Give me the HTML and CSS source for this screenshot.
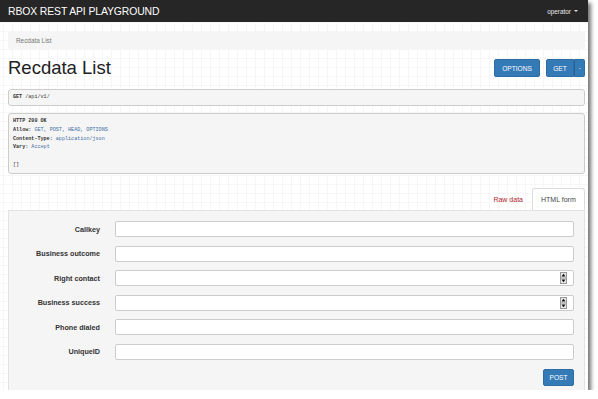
FILE: index.html
```html
<!DOCTYPE html>
<html>
<head>
<meta charset="utf-8">
<link rel="stylesheet" href="styles.css">
</head>
<body>
<div class="window">
  <nav class="navbar">
    <span class="brand">RBOX REST API PLAYGROUND</span>
    <span class="user">operator <i class="caret light"></i></span>
  </nav>
  <div class="container">
    <div class="breadcrumb">Recdata List</div>
    <div class="page-head">
      <h1>Recdata List</h1>
      <div class="actions">
        <button class="btn btn-options">OPTIONS</button>
        <div class="btn-group">
          <button class="btn btn-get">GET</button>
          <button class="btn btn-split"><i class="caret small"></i></button>
        </div>
      </div>
    </div>
    <pre class="request"><b>GET</b> /api/v1/</pre>
    <pre class="response"><b>HTTP 200 OK</b>
<b>Allow:</b> <span class="v">GET, POST, HEAD, OPTIONS</span>
<b>Content-Type:</b> <span class="v">application/json</span>
<b>Vary:</b> <span class="v">Accept</span>

[]</pre>
    <ul class="tabs">
      <li class="tab raw">Raw data</li>
      <li class="tab active">HTML form</li>
    </ul>
    <div class="well">
      <div class="form-grid">
        <label class="lbl">Callkey</label>
        <div class="field"></div>
        <label class="lbl">Business outcome</label>
        <div class="field"></div>
        <label class="lbl">Right contact</label>
        <div class="field num"><svg class="spin" width="7" height="12" viewBox="0 0 7 12"><rect x="0.5" y="0.5" width="6" height="11" fill="#e6e6e6" stroke="#9a9a9a" stroke-width="1"/><path d="M1.5 4.5 L3.5 1.8 L5.5 4.5 Z" fill="#111"/><path d="M1.5 7.5 L3.5 10.2 L5.5 7.5 Z" fill="#111"/><line x1="0.5" y1="6" x2="6.5" y2="6" stroke="#9a9a9a" stroke-width="1"/></svg></div>
        <label class="lbl">Business success</label>
        <div class="field num"><svg class="spin" width="7" height="12" viewBox="0 0 7 12"><rect x="0.5" y="0.5" width="6" height="11" fill="#e6e6e6" stroke="#9a9a9a" stroke-width="1"/><path d="M1.5 4.5 L3.5 1.8 L5.5 4.5 Z" fill="#111"/><path d="M1.5 7.5 L3.5 10.2 L5.5 7.5 Z" fill="#111"/><line x1="0.5" y1="6" x2="6.5" y2="6" stroke="#9a9a9a" stroke-width="1"/></svg></div>
        <label class="lbl">Phone dialed</label>
        <div class="field"></div>
        <label class="lbl">UniqueID</label>
        <div class="field"></div>
      </div>
      <div class="form-actions">
        <button class="btn btn-post">POST</button>
      </div>
    </div>
  </div>
</div>
</body>
</html>
```

FILE: styles.css
```css
* { box-sizing: border-box; }

html, body {
  margin: 0;
  padding: 0;
  background: #fff;
}

body {
  font-family: "Liberation Sans", Arial, sans-serif;
  color: #333;
}

.window {
  width: 588px;
  height: 390px;
  overflow: hidden;
  background-color: #fff;
  background-image:
    linear-gradient(to right, #f6f6f6 1px, transparent 1px),
    linear-gradient(to bottom, #f6f6f6 1px, transparent 1px);
  background-size: 9px 9px;
  background-position: 3px 4px;
  box-shadow: 3px 3px 4px rgba(0, 0, 0, 0.55);
}

.navbar {
  height: 22px;
  background: #262626;
  display: flex;
  align-items: center;
  justify-content: space-between;
  padding: 0 10px 0 8px;
}

.brand {
  color: #fff;
  font-size: 10.4px;
  letter-spacing: -0.1px;
}

.user {
  color: #e6e6e6;
  font-size: 6.4px;
  display: flex;
  align-items: center;
  gap: 3px;
}

.caret {
  display: inline-block;
  width: 0;
  height: 0;
  border-left: 2px solid transparent;
  border-right: 2px solid transparent;
  border-top: 2px solid #ddd;
}

.caret.small {
  border-left-width: 1.5px;
  border-right-width: 1.5px;
  border-top: 1.5px solid #e8e8e8;
}

.container {
  padding: 0 3px 0 8px;
}

.breadcrumb {
  margin-top: 9px;
  height: 18px;
  background: #f5f5f5;
  border-radius: 2px;
  padding-left: 8px;
  font-size: 6.4px;
  color: #777;
  display: flex;
  align-items: center;
}

.page-head {
  margin-top: 10px;
  display: flex;
  justify-content: space-between;
  align-items: flex-start;
  height: 18px;
}

h1 {
  margin: 0;
  font-size: 18.5px;
  line-height: 18px;
  font-weight: normal;
  color: #222;
}

.actions {
  display: flex;
  gap: 6px;
}

.btn {
  font-family: "Liberation Sans", Arial, sans-serif;
  font-size: 6.6px;
  color: #fff;
  background: #337ab7;
  border: 1px solid #2e6da4;
  border-radius: 2px;
  height: 18px;
  padding: 0;
  margin: 0;
  display: flex;
  align-items: center;
  justify-content: center;
}

.btn-options {
  width: 46px;
}

.btn-group {
  display: flex;
}

.btn-get {
  width: 28px;
  border-radius: 2px 0 0 2px;
}

.btn-split {
  width: 11px;
  border-left: 1px solid #2a6296;
  border-radius: 0 2px 2px 0;
}

.request,
.response {
  margin: 0;
  background: #f5f5f5;
  border: 1px solid #ccc;
  border-radius: 3px;
  font-family: "Liberation Mono", "DejaVu Sans Mono", monospace;
  font-size: 5.1px;
  color: #333;
  padding: 0 4px;
}

.request {
  margin-top: 12px;
  height: 17px;
  line-height: 15px;
}

.response {
  margin-top: 7px;
  height: 61px;
  line-height: 8.7px;
  padding-top: 3.3px;
}

.response .v {
  color: #3d6fa3;
}

.tabs {
  list-style: none;
  margin: 14px 0 0 0;
  padding: 0;
  height: 22px;
  display: flex;
  justify-content: flex-end;
  align-items: stretch;
}

.tab {
  font-size: 7px;
  padding: 0 8px;
  display: flex;
  align-items: center;
  border: 1px solid transparent;
  border-bottom: none;
  border-radius: 3px 3px 0 0;
}

.tab.raw {
  color: #b0262a;
}

.tab.active {
  background: #fff;
  border-color: #ddd;
  color: #444;
  width: 53px;
}

.well {
  background: #f5f5f5;
  border: 1px solid #e3e3e3;
  height: 240px;
  padding: 10px 10px 0 0;
}

.form-grid {
  display: grid;
  grid-template-columns: 91px 1fr;
  column-gap: 15px;
  row-gap: 8.6px;
  align-items: center;
}

.lbl {
  font-size: 7.2px;
  font-weight: bold;
  text-align: right;
  color: #333;
}

.field {
  height: 16px;
  background: #fff;
  border: 1px solid #ccc;
  border-radius: 2px;
  display: flex;
  align-items: center;
  justify-content: flex-end;
  padding-right: 6px;
}

.form-actions {
  display: flex;
  justify-content: flex-end;
  margin-top: 9px;
}

.btn-post {
  width: 31px;
  height: 17px;
}
```
